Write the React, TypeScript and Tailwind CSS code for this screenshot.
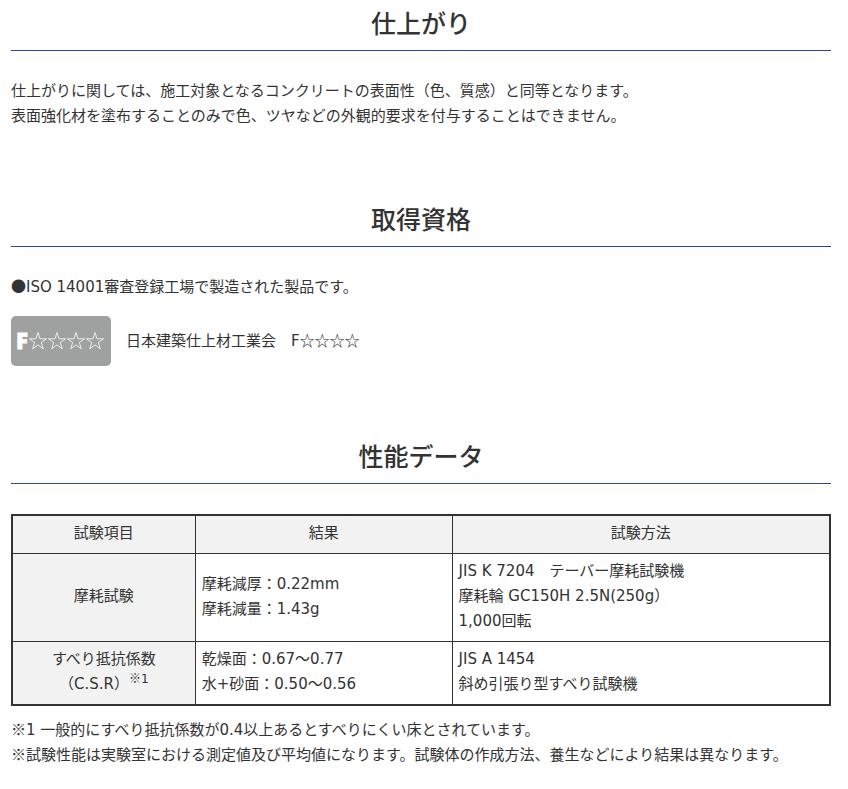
import React from 'react';

interface TestRow {
  name: React.ReactNode;
  results: string[];
  methods: string[];
}

const rows: TestRow[] = [
  {
    name: '摩耗試験',
    results: ['摩耗減厚：0.22mm', '摩耗減量：1.43g'],
    methods: ['JIS K 7204　テーバー摩耗試験機', '摩耗輪 GC150H 2.5N(250g）', '1,000回転'],
  },
  {
    name: (
      <>
        すべり抵抗係数
        <br />
        （C.S.R）
        <sup className="text-xs">
          <Cjk>※</Cjk>1
        </sup>
      </>
    ),
    results: ['乾燥面：0.67～0.77', '水+砂面：0.50～0.56'],
    methods: ['JIS A 1454', '斜め引張り型すべり試験機'],
  },
];

// Symbols that should keep their full-width Japanese shape
function Cjk({ children }: { children: React.ReactNode }) {
  return <span className="font-['Noto_Sans_CJK_JP',sans-serif] leading-none">{children}</span>;
}

const Section: React.FC<{ title: string; children: React.ReactNode }> = ({ title, children }) => (
  <section>
    <h2 className="border-b border-[#264a8a] pb-3 text-center font-['Noto_Sans_CJK_JP',sans-serif] text-[25px] leading-8 font-medium">
      {title}
    </h2>
    {children}
  </section>
);

const Lines: React.FC<{ items: string[] }> = ({ items }) => (
  <>
    {items.map((item) => (
      <div key={item}>{item}</div>
    ))}
  </>
);

const FourStarBadge = () => (
  <svg className="h-[50px] w-[100px] shrink-0" viewBox="0 0 100 50" role="img" aria-label="F☆☆☆☆">
    <rect width="100" height="50" rx="5" fill="#9fa0a0" />
    <text x="5" y="33" fill="#fff" fontFamily="Noto Sans, sans-serif" fontSize="22" fontWeight="900" stroke="#fff" strokeWidth="0.8">
      F
    </text>
    {[27, 46, 65, 84].map((cx) => (
      <path
        key={cx}
        transform={`translate(${cx} 25)`}
        d="M0-8.5 2-2.2H8.6L3.3 1.5 5.3 7.8 0 3.9-5.3 7.8-3.3 1.5-8.6-2.2H-2Z"
        fill="none"
        stroke="#fff"
        strokeWidth="0.8"
      />
    ))}
  </svg>
);

const App: React.FC = () => {
  return (
    <main className="flex flex-col gap-[73px] bg-white pt-[6px] pr-[17px] pb-5 pl-[11px] font-['DejaVu_Sans','Noto_Sans_CJK_JP',sans-serif] text-[15px] leading-[25px] text-[#333]">
      <Section title="仕上がり">
        <p className="mt-7">
          仕上がりに関しては、施工対象となるコンクリートの表面性（色、質感）と同等となります。
          <br />
          表面強化材を塗布することのみで色、ツヤなどの外観的要求を付与することはできません。
        </p>
      </Section>

      <Section title="取得資格">
        <p className="mt-7">
          <Cjk>●</Cjk>ISO 14001審査登録工場で製造された製品です。
        </p>
        <div className="mt-4 flex items-center gap-[15px]">
          <FourStarBadge />
          <p>
            日本建築仕上材工業会　F<Cjk>☆☆☆☆</Cjk>
          </p>
        </div>
      </Section>

      <Section title="性能データ">
        <table className="mt-[30px] w-full table-fixed border-collapse border-2 border-[#333]">
          <thead>
            <tr className="bg-[#f2f2f2]">
              <th scope="col" className="w-[22.4%] border border-[#333] px-[6px] pt-[5px] pb-[7px] font-normal">
                試験項目
              </th>
              <th scope="col" className="w-[31.4%] border border-[#333] px-[6px] pt-[5px] pb-[7px] font-normal">
                結果
              </th>
              <th scope="col" className="border border-[#333] px-[6px] pt-[5px] pb-[7px] font-normal">
                試験方法
              </th>
            </tr>
          </thead>
          <tbody>
            {rows.map((row, index) => (
              <tr key={index}>
                <th scope="row" className="border border-[#333] bg-[#f2f2f2] px-[6px] pt-[5px] pb-[7px] font-normal">
                  {row.name}
                </th>
                <td className="border border-[#333] px-[6px] pt-[5px] pb-[7px]">
                  <Lines items={row.results} />
                </td>
                <td className="border border-[#333] px-[6px] pt-[5px] pb-[7px]">
                  <Lines items={row.methods} />
                </td>
              </tr>
            ))}
          </tbody>
        </table>
        <p className="mt-3">
          <Cjk>※</Cjk>1 一般的にすべり抵抗係数が0.4以上あるとすべりにくい床とされています。
          <br />
          <Cjk>※</Cjk>試験性能は実験室における測定値及び平均値になります。試験体の作成方法、養生などにより結果は異なります。
        </p>
      </Section>
    </main>
  );
};

export default App;
